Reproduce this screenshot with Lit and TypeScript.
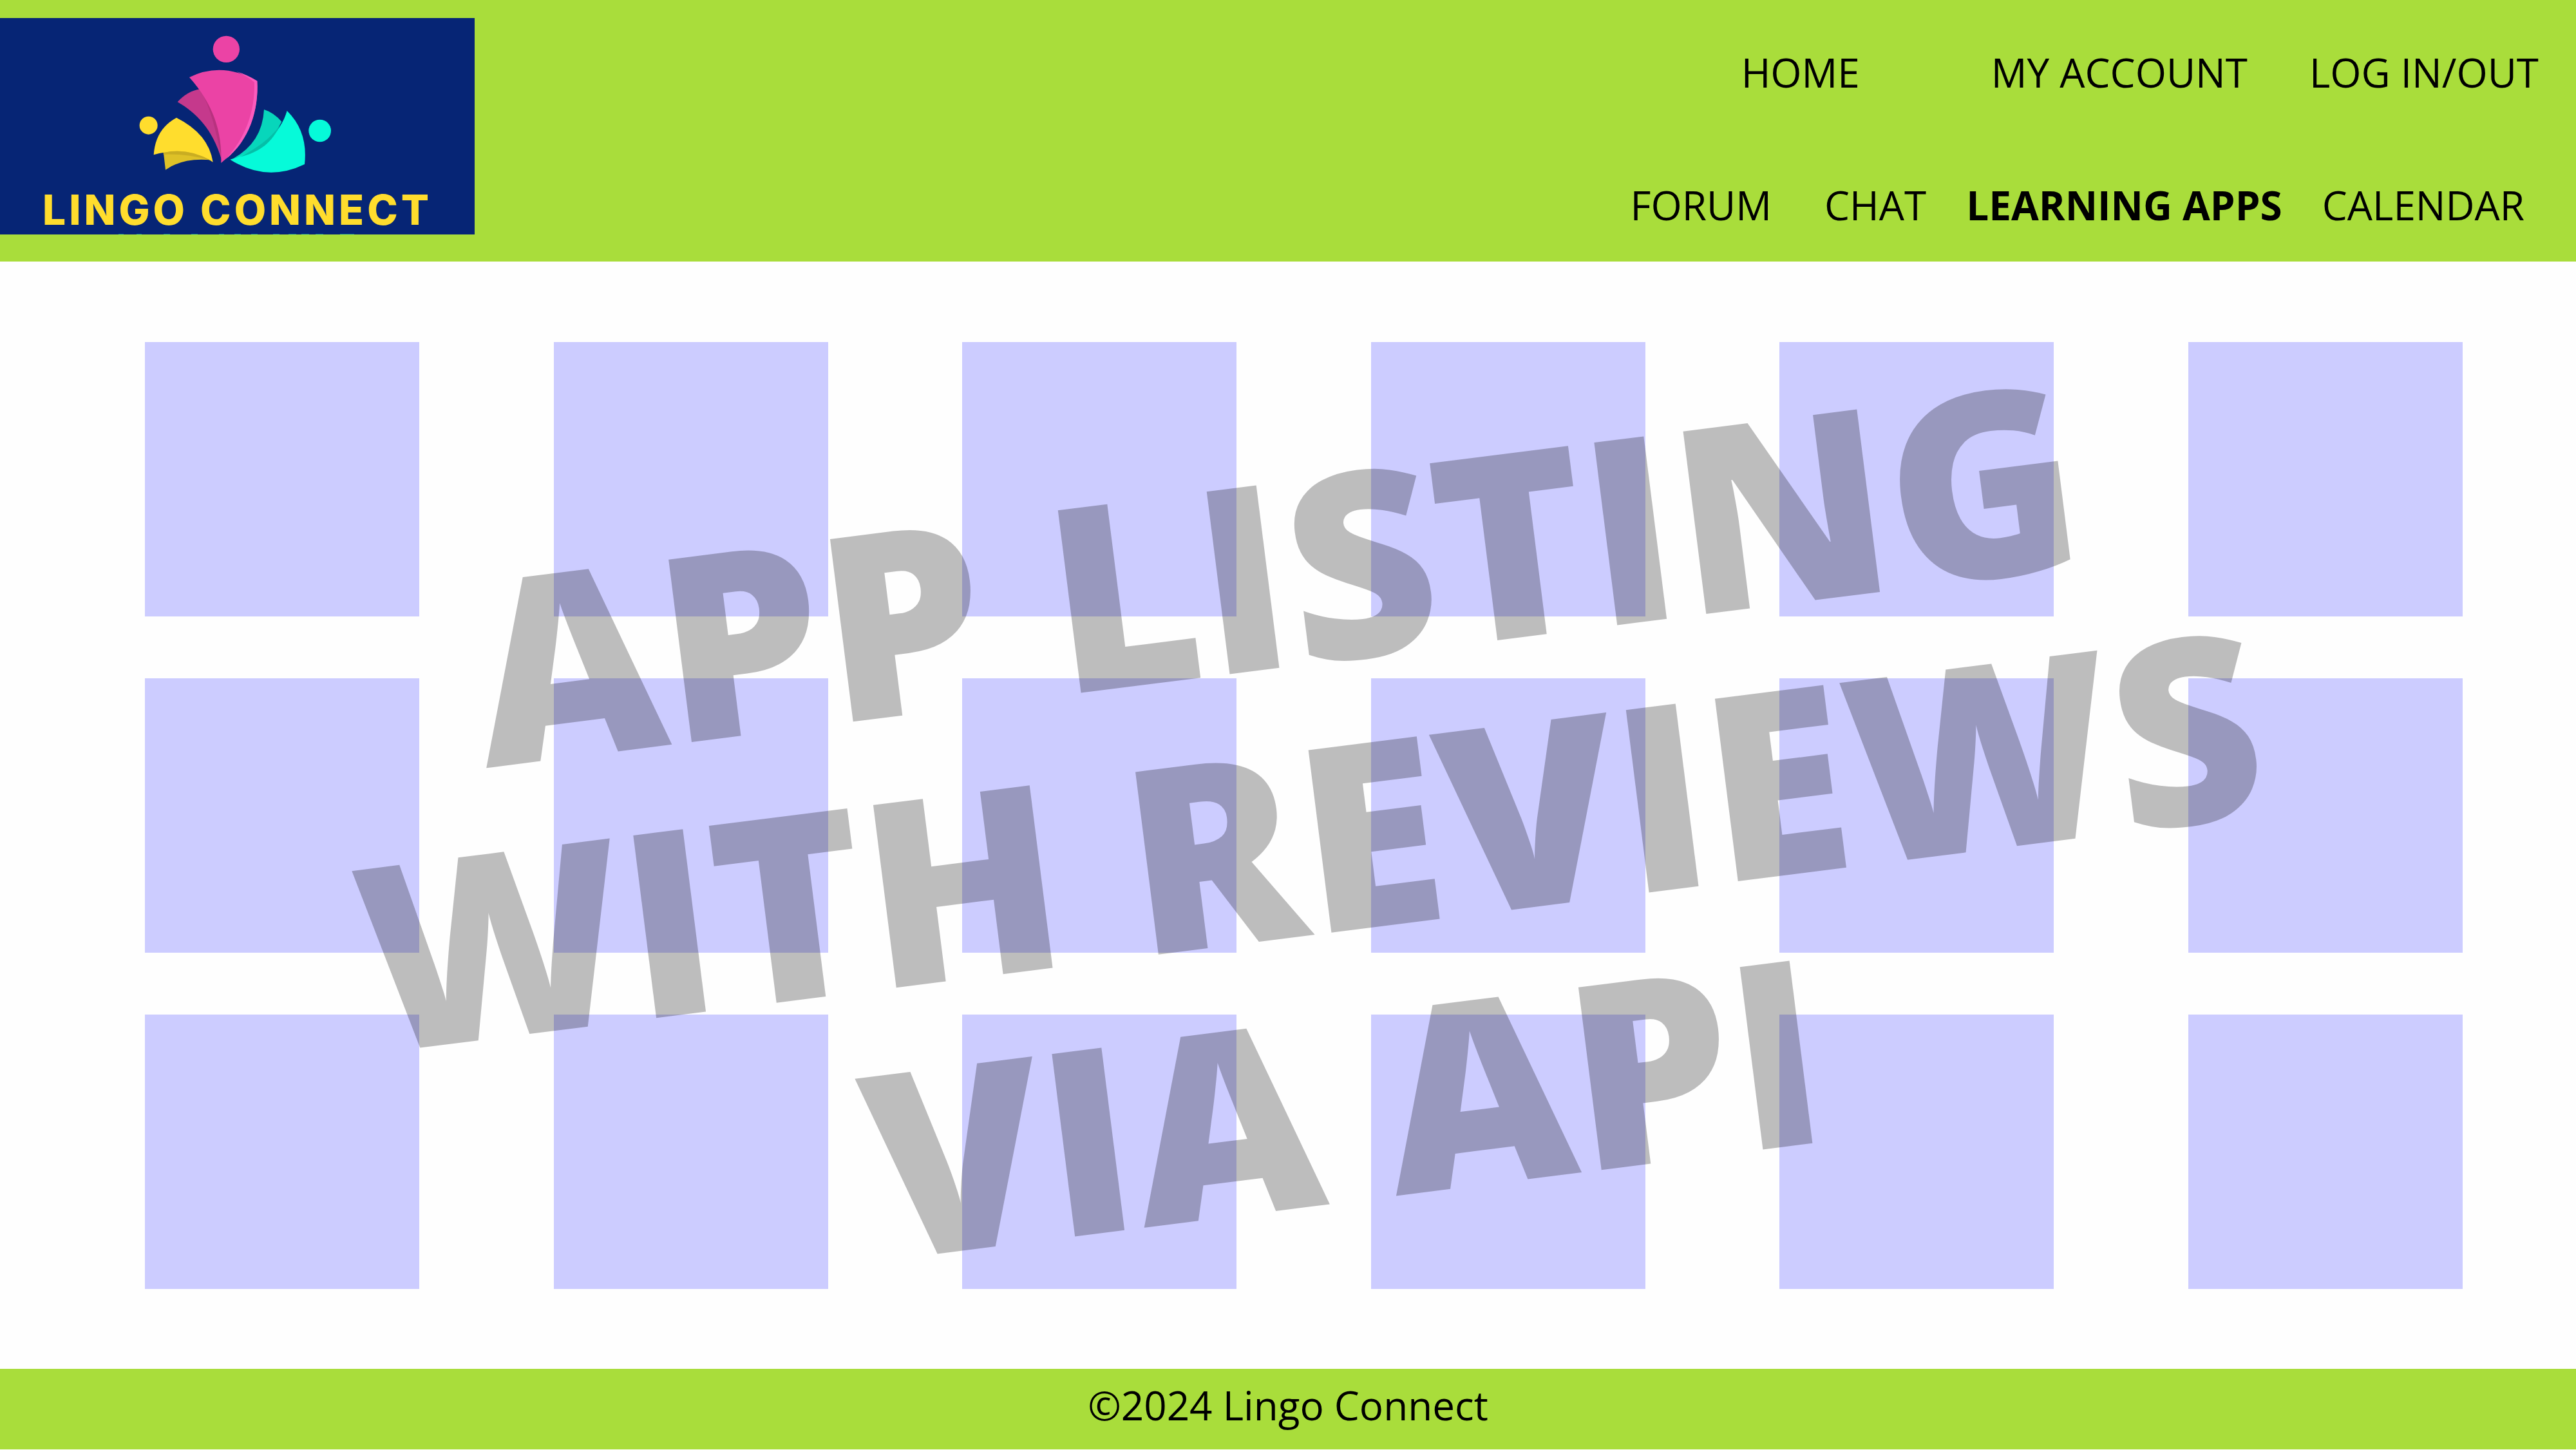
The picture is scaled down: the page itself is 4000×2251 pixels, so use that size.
import { LitElement, html, css } from "lit";
import { customElement } from "lit/decorators.js";

interface NavLink {
  label: string;
  href: string;
  itemClass: string;
  current?: boolean;
}

const ACCOUNT_LINKS: NavLink[] = [
  { label: "HOME", href: "#home", itemClass: "item-home" },
  { label: "MY ACCOUNT", href: "#account", itemClass: "item" },
  { label: "LOG IN/OUT", href: "#login", itemClass: "item" },
];

const SECTION_LINKS: NavLink[] = [
  { label: "FORUM", href: "#forum", itemClass: "item-forum" },
  { label: "CHAT", href: "#chat", itemClass: "item" },
  { label: "LEARNING APPS", href: "#apps", itemClass: "item", current: true },
  { label: "CALENDAR", href: "#calendar", itemClass: "item" },
];

const APP_COUNT = 18;

@customElement("lingo-logo")
export class LingoLogo extends LitElement {
  static styles = css`
    :host {
      display: block;
    }
    .logo {
      display: flex;
      flex-direction: column;
      align-items: center;
      width: 737px;
      background: #062575;
      text-decoration: none;
      overflow: hidden;
    }
    .mark {
      display: block;
      width: 360px;
      height: 250px;
    }
    .name {
      padding: 12px 0 1px;
      color: #ffdd2d;
      font: 800 64px/72px Inter, sans-serif;
      letter-spacing: 5px;
      white-space: nowrap;
    }
    .edge {
      display: block;
      width: 370px;
      height: 1px;
    }
  `;

  render() {
    return html`
      <a class="logo" href="#home">
        <svg class="mark" viewBox="25 -9 1080 750" aria-hidden="true">
          <circle cx="512" cy="136" r="62" fill="#eb43a5" />
          <path
            d="M285 382Q330 332 390 322C450 390 490 490 490 650C450 510 370 430 285 382Z"
            fill="#c5398c"
          />
          <path
            d="M390 322C450 390 490 490 490 640C464 520 440 410 390 322Z"
            fill="#b8327f"
          />
          <path
            d="M340 267Q492 192 656 284C664 420 620 560 488 666C494 520 450 390 340 267Z"
            fill="#eb43a5"
          />
          <path
            d="M560 240Q612 256 656 284C664 420 620 560 510 648C600 550 646 430 643 290Q610 262 560 240Z"
            fill="#fb5bbd"
          />
          <circle cx="150" cy="491" r="42" fill="#ffdd2d" />
          <path d="M219 612L229 698Q310 640 440 652L400 612Z" fill="#dec127" />
          <path
            d="M174 628Q182 508 280 455Q430 530 450 662Q330 584 174 628Z"
            fill="#ffdd2d"
          />
          <path
            d="M219 618Q330 592 440 654Q330 622 219 626Z"
            fill="#c9ad22"
          />
          <circle cx="948" cy="516" r="52" fill="#06fad9" />
          <path
            d="M688 417Q735 432 770 474L700 600L545 645Q680 570 688 417Z"
            fill="#07d6bb"
          />
          <path
            d="M795 423Q894 520 877 672Q700 758 530 650C670 610 765 530 795 423Z"
            fill="#06fad9"
          />
          <path
            d="M764 488C725 570 670 615 575 638C650 600 715 556 764 488Z"
            fill="#05bfa8"
          />
        </svg>
        <span class="name">LINGO CONNECT</span>
        <svg class="edge" viewBox="0 0 370 1" aria-hidden="true">
          <path
            d="M0 0.5h8M28 0.5h8M70 0.5h10M113 0.5h10M156 0.5h8M180 0.5h10M206 0.5h10M240 0.5h10M264 0.5h12M284 0.5h12M306 0.5h12M344 0.5h22"
            stroke="#0a7f9c"
            stroke-width="1"
          />
        </svg>
      </a>
    `;
  }
}

@customElement("app-root")
export class AppRoot extends LitElement {
  static styles = css`
    :host {
      display: block;
      background: #fefefe;
      color: #000;
      font-family: "Open Sans", "Noto Sans", sans-serif;
    }
    .page {
      display: flex;
      flex-direction: column;
      min-height: 100vh;
    }
    .header {
      display: flex;
      justify-content: space-between;
      align-items: flex-start;
      padding-bottom: 42px;
      background: #a9dd3b;
    }
    .brand {
      margin-top: 28px;
    }
    .nav {
      display: flex;
      flex-direction: column;
      gap: 126px;
      padding-top: 72px;
    }
    .row {
      display: flex;
      justify-content: flex-end;
      margin: 0;
      padding: 0;
      list-style: none;
    }
    .row-account {
      gap: 96px;
      padding-right: 58px;
    }
    .row-sections {
      gap: 62px;
      padding-right: 80px;
    }
    .link {
      color: inherit;
      font-size: 62px;
      line-height: 80px;
      text-decoration: none;
      white-space: nowrap;
    }
    .item-home {
      margin-right: 108px;
    }
    .item-forum {
      margin-right: 20px;
    }
    .current {
      font-weight: 700;
    }
    .main {
      position: relative;
      flex: 1;
      padding: 125px 176px 124px 225px;
    }
    .apps {
      display: grid;
      grid-template-columns: repeat(6, 426px);
      justify-content: space-between;
      row-gap: 96px;
      margin: 0;
      padding: 0;
      list-style: none;
    }
    .app {
      aspect-ratio: 1;
      background: #ccccff;
    }
    .overlay {
      position: absolute;
      inset: 0;
      display: grid;
      place-content: center;
      padding: 60px 0 0 64px;
      pointer-events: none;
    }
    .notice {
      margin: 0;
      font-size: 400px;
      font-weight: 800;
      line-height: 418px;
      text-align: center;
      white-space: nowrap;
      opacity: 0.25;
      transform: rotate(-7.2deg);
    }
    .line {
      display: block;
    }
    .footer {
      padding: 16px 0 29px;
      border-bottom: 1px solid #fefefe;
      background: #a9dd3b;
      font-size: 62px;
      line-height: 80px;
      text-align: center;
    }
    .copyright {
      margin: 0;
    }
  `;

  private renderLink(link: NavLink) {
    return html`
      <li class=${link.itemClass}>
        <a
          class="link ${link.current ? "current" : ""}"
          href=${link.href}
          aria-current=${link.current ? "page" : "false"}
          >${link.label}</a
        >
      </li>
    `;
  }

  render() {
    return html`
      <div class="page">
        <header class="header">
          <lingo-logo class="brand"></lingo-logo>
          <nav class="nav">
            <ul class="row row-account">
              ${ACCOUNT_LINKS.map((link) => this.renderLink(link))}
            </ul>
            <ul class="row row-sections">
              ${SECTION_LINKS.map((link) => this.renderLink(link))}
            </ul>
          </nav>
        </header>
        <main class="main">
          <ul class="apps">
            ${Array.from({ length: APP_COUNT }, () => html`<li class="app"></li>`)}
          </ul>
          <div class="overlay">
            <h1 class="notice">
              <span class="line">APP LISTING</span>
              <span class="line">WITH REVIEWS</span>
              <span class="line">VIA API</span>
            </h1>
          </div>
        </main>
        <footer class="footer">
          <p class="copyright">©2024 Lingo Connect</p>
        </footer>
      </div>
    `;
  }
}
